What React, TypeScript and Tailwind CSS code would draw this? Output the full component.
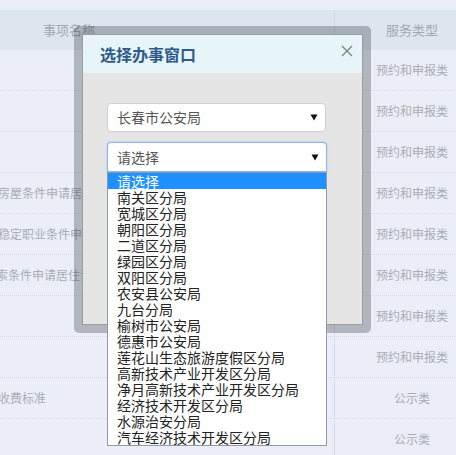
import React from 'react';

const font = { fontFamily: '"Noto Sans CJK SC", "Noto Sans", sans-serif' };

const rows = [
  { left: '', shift: '', right: '预约和申报类' },
  { left: '', shift: '', right: '预约和申报类' },
  { left: '', shift: '', right: '预约和申报类' },
  { left: '合法稳定住所房屋条件申请居住证', shift: 'ml-[-74px]', right: '预约和申报类' },
  { left: '合法稳定职业条件申请居住证', shift: 'ml-[-26px]', right: '预约和申报类' },
  { left: '连续就学索条件申请居住证', shift: 'ml-[-52px]', right: '预约和申报类' },
  { left: '', shift: '', right: '预约和申报类' },
  { left: '', shift: '', right: '预约和申报类' },
  { left: '居住证工本费收费标准', shift: 'ml-[-74px]', right: '公示类' },
  { left: '', shift: '', right: '公示类' },
];

const options = [
  '请选择',
  '南关区分局',
  '宽城区分局',
  '朝阳区分局',
  '二道区分局',
  '绿园区分局',
  '双阳区分局',
  '农安县公安局',
  '九台分局',
  '榆树市公安局',
  '德惠市公安局',
  '莲花山生态旅游度假区分局',
  '高新技术产业开发区分局',
  '净月高新技术产业开发区分局',
  '经济技术开发区分局',
  '水源治安分局',
  '汽车经济技术开发区分局',
];

function Caret() {
  return (
    <svg width="8" height="7" viewBox="0 0 8 7" className="shrink-0">
      <path d="M0.5 0.5 H7.5 L4 6.5 Z" fill="#111" />
    </svg>
  );
}

function Background() {
  return (
    <div className="w-[489px]">
      <div className="h-[10px]" />
      <div className="flex h-[40px] bg-[#dbe6ef] text-[13px] text-[#a3a8ae]">
        <div className="w-[335px] flex items-center pl-[43px] border-r border-[#cfd8e2]">事项名称</div>
        <div className="w-[154px] flex items-center justify-center">服务类型</div>
      </div>
      {rows.map((r, i) => (
        <div
          key={i}
          className="flex h-[41px] border-b border-dotted border-[#d4dae4] text-[12px] text-[#a9adb3]"
        >
          <div className="w-[335px] flex items-center overflow-hidden border-r border-[#d6dce6]">
            <span className={`whitespace-nowrap ${r.shift}`}>{r.left}</span>
          </div>
          <div className="w-[154px] flex items-center justify-center">{r.right}</div>
        </div>
      ))}
    </div>
  );
}

function Modal() {
  return (
    <div className="absolute left-[74px] top-[26px] w-[297px] h-[307px] rounded-[5px] bg-[rgba(40,50,60,0.3)] p-[8px]">
      <div className="h-full border border-[#9c9c9c] bg-[#e5e5e5]">
        <div className="h-[38px] bg-[#e7f5f8] flex items-center justify-between pl-[17px] pr-[9px]">
          <span className="text-[16px] font-bold text-[#2f5b8b]">选择办事窗口</span>
          <svg width="12" height="12" viewBox="0 0 12 12" className="-mt-[7px]">
            <path d="M1 1 L11 11 M11 1 L1 11" stroke="#808080" strokeWidth="1.3" />
          </svg>
        </div>
        <div className="pt-[30px] pl-[24px]">
          <div className="w-[219px] h-[29px] bg-white rounded-[4px] border border-[#cfcfcf] flex items-center justify-between pl-[9px] pr-[7px] text-[14px] text-[#555]">
            <span>长春市公安局</span>
            <Caret />
          </div>
          <div className="relative mt-[10px] w-[220px]">
            <div className="h-[30px] bg-white rounded-t-[4px] border border-[#8db4e2] shadow-[0_0_2px_rgba(102,175,233,0.6)] flex items-center justify-between pl-[9px] pr-[7px] text-[14px] text-[#555]">
              <span>请选择</span>
              <Caret />
            </div>
            <div className="absolute left-0 top-full w-[220px] bg-white border border-[#8f9bab] text-[14px] leading-[16px] text-[#222]">
              {options.map((o, i) => (
                <div
                  key={o}
                  className={i === 0 ? 'h-[16px] pl-[9px] bg-[#1e90ff] text-white' : 'h-[16px] pl-[9px]'}
                >
                  {o}
                </div>
              ))}
            </div>
          </div>
        </div>
      </div>
    </div>
  );
}

export default function App() {
  return (
    <div className="relative w-[456px] h-[455px] overflow-hidden bg-[#ebeef7]" style={font}>
      <Background />
      <Modal />
    </div>
  );
}
